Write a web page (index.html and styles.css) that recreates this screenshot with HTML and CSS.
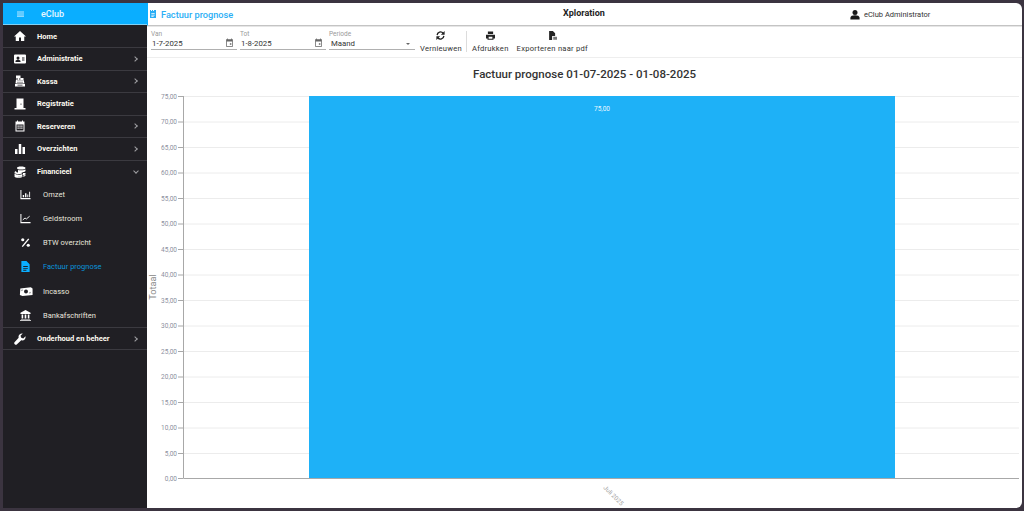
FILE: index.html
```html
<!DOCTYPE html>
<html lang="nl">
<head>
<meta charset="utf-8">
<title>Factuur prognose</title>
<link rel="stylesheet" href="styles.css">
</head>
<body>
<div class="window">
  <aside class="sidebar">
    <div class="brand">
      <svg class="burger" viewBox="0 0 10 8"><path d="M0 1h10M0 4h10M0 7h10" stroke="#b9e8ff" stroke-width="1.500"/></svg>
      <span>eClub</span>
    </div>
    <nav class="menu">
      <div class="item">
        <svg class="ic" viewBox="0 0 24 24"><path d="M12 2 0 13h3.500v9H10v-7h4v7h6.500v-9H24z"/></svg>
        <span class="lbl">Home</span>
      </div>
      <div class="item">
        <svg class="ic" viewBox="0 0 24 24"><path fill-rule="evenodd" d="M2 3h20a2 2 0 0 1 2 2v14a2 2 0 0 1-2 2H2a2 2 0 0 1-2-2V5a2 2 0 0 1 2-2zm6 4a3 3 0 1 0 0 6 3 3 0 0 0 0-6zm-5 11h10v-1.500c0-2-2.500-3-5-3s-5 1-5 3zM16 9v2h5V9zm0 4v2h5v-2z"/></svg>
        <span class="lbl">Administratie</span><i class="chev"></i>
      </div>
      <div class="item">
        <svg class="ic" viewBox="0 0 24 24"><path fill-rule="evenodd" d="M4 1h9v6h-3v2h3V6h6v3l2 8H3l1-8h4V7H4zM2 18h20v5H2zm5 1.500V21h10v-1.500zM7 11v1.500h2V11zm4 0v1.500h2V11zm4 0v1.500h2V11zM7 14v1.500h2V14zm4 0v1.500h2V14zm4 0v1.500h2V14z"/></svg>
        <span class="lbl">Kassa</span><i class="chev"></i>
      </div>
      <div class="item">
        <svg class="ic" viewBox="0 0 24 24"><path fill-rule="evenodd" d="M5 1h14v19h4v3H1v-3h4zm9 10a1.200 1.200 0 1 0 0 2.400 1.200 1.200 0 0 0 0-2.400z"/></svg>
        <span class="lbl">Registratie</span>
      </div>
      <div class="item">
        <svg class="ic" viewBox="0 0 24 24"><path fill-rule="evenodd" d="M6 1h2v2h8V1h2v2h3v20H3V3h3zM5 9v12h14V9zm2 2h2.500v2.500H7zm3.800 0h2.500v2.500h-2.500zm3.700 0H17v2.500h-2.500zM7 15h2.500v2.500H7zm3.800 0h2.500v2.500h-2.500zm3.700 0H17v2.500h-2.500z"/></svg>
        <span class="lbl">Reserveren</span><i class="chev"></i>
      </div>
      <div class="item">
        <svg class="ic" viewBox="0 0 24 24"><path d="M2 12h5v10H2zM9.500 2h5v20h-5zM17 8h5v14h-5z"/></svg>
        <span class="lbl">Overzichten</span><i class="chev"></i>
      </div>
      <div class="item open">
        <svg class="ic" viewBox="0 0 24 24"><path d="M14 1c5 0 9 1 9 3s-4 3-9 3-8-1-8-3 3-3 8-3zM8 8c3 1 10 1 15-1v3c0 1-5 3-10 3H8zM4 10c-1 1-3 1-3 3s4 3 8 3 8-1 8-3H9c-3 0-5-1-5-3zm-3 5v3c0 2 4 3 8 3s8-1 8-3v-2c-3 2-13 2-16-1zm0 4v2c0 2 4 2.500 8 2.500s8-.5 8-2.500v-1c-4 2-12 2-16-1zm17-5h5v2c0 1-2 2-5 2zm0 5c2 0 4-1 5-2v2c0 1-2 2-5 2z"/></svg>
        <span class="lbl">Financieel</span><i class="chev down"></i>
      </div>
      <div class="subs">
        <div class="sub">
          <svg class="sic" viewBox="0 0 24 24"><path d="M2 2v19h21" fill="none" stroke="#fff" stroke-width="2.200"/><path d="M6 13h3v5H6zM11 9h3v9h-3zM16 12h2v6h-2zM20 6h2v12h-2z"/></svg>
          <span>Omzet</span>
        </div>
        <div class="sub">
          <svg class="sic" viewBox="0 0 24 24"><path d="M2 2v19h21" fill="none" stroke="#fff" stroke-width="2.200"/><path d="M6 15l5-4 3 2 7-6" fill="none" stroke="#fff" stroke-width="2"/></svg>
          <span>Geldstroom</span>
        </div>
        <div class="sub">
          <svg class="sic" viewBox="0 0 24 24"><path d="M5 21 19 4" stroke="#fff" stroke-width="3"/><circle cx="6" cy="6" r="3.500"/><circle cx="18" cy="18" r="3.500"/></svg>
          <span>BTW overzicht</span>
        </div>
        <div class="sub active">
          <svg class="sic" viewBox="0 0 24 24"><path fill-rule="evenodd" d="M3 0h11l7 7v17H3zM7 11v2h10v-2zm0 4v2h10v-2zm0 4v2h7v-2z"/></svg>
          <span>Factuur prognose</span>
        </div>
        <div class="sub">
          <svg class="sic wide" viewBox="0 0 32 24"><path fill-rule="evenodd" d="M3 5 27 2l4 3v15L8 22l-6-2zm13 2.500a4.500 4.500 0 1 0 0 9 4.500 4.500 0 0 0 0-9zM6 8v3.500L9 8zm20 8v-3.500L23 16z"/></svg>
          <span>Incasso</span>
        </div>
        <div class="sub">
          <svg class="sic" viewBox="0 0 24 24"><path d="M12 0 1 6v2.500h22V6zM3.500 10H7v8.500H3.500zM10.200 10h3.600v8.500h-3.600zM17 10h3.500v8.500H17zM2 20h20v1.500H2zM0 22.500h24V24H0z"/></svg>
          <span>Bankafschriften</span>
        </div>
      </div>
      <div class="item last">
        <svg class="ic" viewBox="0 0 24 24"><path d="M23 6.500 18.500 11 14.500 9.500 13 5.500 17.500 1C13.500 0 9 3 9 7.500c0 .8.100 1.500.3 2L1.500 18a3 3 0 0 0 4.500 4.500l8.500-7.800c.7.200 1.300.3 2 .3 4.500 0 7.500-4.500 6.500-8.500z"/></svg>
        <span class="lbl">Onderhoud en beheer</span><i class="chev"></i>
      </div>
    </nav>
  </aside>
  <main class="main">
    <header class="topbar">
      <div class="page-title">
        <svg class="title-ic" viewBox="0 0 24 24"><path fill-rule="evenodd" d="M3 0h3v3h3V0h3v3h3V0h6v24H3zM7 9v2.500h10V9zm0 5v2.500h10V14zm0 4.500V21h7v-2.500z"/></svg>
        <span>Factuur prognose</span>
      </div>
      <div class="org">Xploration</div>
      <div class="user">
        <svg class="user-ic" viewBox="0 0 24 24"><circle cx="12" cy="7" r="6"/><path d="M1 24v-4c0-4 5-6 11-6s11 2 11 6v4z"/></svg>
        <span>eClub Administrator</span>
      </div>
    </header>
    <div class="toolbar">
      <div class="field f-date">
        <label>Van</label>
        <div class="val"><span>1-7-2025</span><svg class="cal" viewBox="0 0 24 24"><path fill-rule="evenodd" d="M6 1h2v2h8V1h2v2h3v20H3V3h3zM5 9v12h14V9zm8 5h4v4h-4z"/></svg></div>
      </div>
      <div class="field f-date">
        <label>Tot</label>
        <div class="val"><span>1-8-2025</span><svg class="cal" viewBox="0 0 24 24"><path fill-rule="evenodd" d="M6 1h2v2h8V1h2v2h3v20H3V3h3zM5 9v12h14V9zm8 5h4v4h-4z"/></svg></div>
      </div>
      <div class="field f-sel">
        <label>Periode</label>
        <div class="val"><span class="sel">Maand</span><i class="caret"></i></div>
      </div>
      <button class="tool t-refresh">
        <svg class="tic" viewBox="0 0 24 24"><path d="M3 11a9 9 0 0 1 16-5M21 13a9 9 0 0 1-16 5" fill="none" stroke="#222" stroke-width="3.500"/><path d="M23 0v10H13zM1 24V14h10z"/></svg>
        <span>Vernieuwen</span>
      </button>
      <div class="sep"></div>
      <button class="tool">
        <svg class="tic" viewBox="0 0 24 24"><path fill-rule="evenodd" d="M5 1h14v7H5zM0 10h24v10h-4v3H4v-3H0zm7 5v5.500h10V15z"/></svg>
        <span>Afdrukken</span>
      </button>
      <button class="tool">
        <svg class="tic" viewBox="0 0 24 24"><path d="M3 0h10l6 6v7h-8v11H3z"/><path d="M14 15h10v8H14z" fill="#777"/></svg>
        <span>Exporteren naar pdf</span>
      </button>
    </div>
    <section class="chart-wrap">
      <h1 class="chart-title">Factuur prognose 01-07-2025 - 01-08-2025</h1>
      <svg class="chart" viewBox="0 26 875 426">
        <g class="grid">
          <path d="M36 38.500H872M36 64H872M36 89.500H872M36 115H872M36 140.500H872M36 166H872M36 191.500H872M36 217H872M36 242.500H872M36 268H872M36 293.500H872M36 319H872M36 344.500H872M36 370H872M36 395.500H872"/>
        </g>
        <rect class="bar" x="162" y="38" width="586" height="382"/>
        <path class="axis" d="M36.500 38V420.500H872"/>
        <path class="axis" d="M31 38.500h5M31 64h5M31 89.500h5M31 115h5M31 140.500h5M31 166h5M31 191.500h5M31 217h5M31 242.500h5M31 268h5M31 293.500h5M31 319h5M31 344.500h5M31 370h5M31 395.500h5M31 420.500h5"/>
        <g class="ylab">
          <text x="30" y="40.500">75,00</text><text x="30" y="66">70,00</text><text x="30" y="91.500">65,00</text><text x="30" y="117">60,00</text><text x="30" y="142.500">55,00</text><text x="30" y="168">50,00</text><text x="30" y="193.500">45,00</text><text x="30" y="219">40,00</text><text x="30" y="244.500">35,00</text><text x="30" y="270">30,00</text><text x="30" y="295.500">25,00</text><text x="30" y="321">20,00</text><text x="30" y="346.500">15,00</text><text x="30" y="372">10,00</text><text x="30" y="397.500">5,00</text><text x="30" y="422.500">0,00</text>
        </g>
        <text class="dlab" x="455" y="53">75,00</text>
        <text class="ytitle" transform="translate(9 229) rotate(-90)">Totaal</text>
        <text class="xlab" transform="translate(465 439) rotate(45)" text-anchor="middle">Juli 2025</text>
      </svg>
    </section>
  </main>
</div>
</body>
</html>
```

FILE: styles.css
```css
* { box-sizing: border-box; }
html, body { margin: 0; height: 100%; overflow: hidden; }
body {
  background: #3b3440;
  padding: 3px 2px 3px 3px;
  font-family: Roboto, "Liberation Sans", sans-serif;
}
.window {
  display: flex;
  height: 505px;
  background: #fff;
  border-radius: 0 6px 6px 0;
  overflow: hidden;
}
.sidebar {
  flex: 0 0 144px;
  background: #201f24;
  color: #fff;
}
.brand {
  display: flex;
  align-items: center;
  height: 22px;
  background: #0aaeff;
  border-bottom: 1px solid #7fd0f5;
  color: #e6f7ff;
  font-size: 9px;
  font-weight: 500;
}
.burger { width: 7px; height: 6px; margin-left: 14px; }
.brand span { margin-left: 17px; }
.menu { padding-top: .7px; }
.item {
  display: flex;
  align-items: center;
  height: 22.500px;
  border-bottom: 1px solid #3b3a40;
  font-size: 7.500px;
  font-weight: 700;
}
.item.open { border-bottom: 0; }
.item.last { border-top: 1px solid #3b3a40; height: 23px; }
.ic { width: 12px; height: 12px; margin-left: 11px; fill: #fff; flex: none; }
.lbl { margin-left: 11px; flex: 1; color: #fdfaf0; }
.chev {
  width: 4px;
  height: 4px;
  margin-right: 10px;
  border-top: 1px solid #a0a0a4;
  border-right: 1px solid #a0a0a4;
  transform: rotate(45deg);
}
.chev.down { transform: rotate(135deg); margin-right: 9px; margin-top: -2px; }
.subs { margin-top: -.9px; }
.sub {
  display: flex;
  align-items: center;
  height: 24.200px;
  color: #e8e6df;
  font-size: 7.500px;
  font-weight: 400;
}
.sic { width: 11px; height: 11px; margin-left: 17px; fill: #fff; flex: none; }
.sic.wide { width: 14px; margin-left: 16px; margin-right: -2px; }
.sub span { margin-left: 12px; }
.sub.active { color: #0a94dc; }
.sub.active .sic { fill: #0aaeff; }
.main { flex: 1; min-width: 0; display: flex; flex-direction: column; }
.topbar {
  display: flex;
  align-items: center;
  height: 23px;
  border-bottom: 1px solid #c4c4c4;
  border-left: 1px solid #0aaeff;
  flex: none;
  box-shadow: 0 1px 0 #e6e6e6;
}
.page-title {
  display: flex;
  align-items: center;
  width: 415px;
  color: #2aaef5;
  font-size: 9.200px;
  font-weight: 500;
}
.title-ic { width: 8px; height: 10px; margin-left: 1px; fill: #2aaef5; }
.page-title span { margin-left: 4px; }
.org { width: 287px; font-size: 9px; font-weight: 700; color: #1e1e1e; margin-top: -2px; }
.user { display: flex; align-items: center; color: #333; font-size: 7.500px; font-weight: 400; }
.user-ic { width: 10px; height: 11px; fill: #1a1a1a; margin-right: 4px; }
.toolbar {
  display: flex;
  align-items: flex-start;
  height: 32px;
  flex: none;
  padding: 5px 0 0 4px;
  border-bottom: 1px solid #eeeeee;
}
.field { margin-right: 3px; border-bottom: 1px solid #b0b0b0; height: 19px; }
.f-date { width: 86px; }
.f-sel { width: 86px; }
.field label { display: block; font-size: 6.500px; line-height: 7px; color: #9a9a9a; }
.val { display: flex; align-items: center; justify-content: space-between; font-size: 7.800px; line-height: 11px; color: #333; padding-left: 1px; }
.sel { margin-left: 1px; }
.cal { width: 9px; height: 9px; fill: #666; margin-right: 3px; margin-top: -2px; }
.caret {
  width: 0;
  height: 0;
  border: 2px solid transparent;
  border-top-color: #666;
  border-bottom: 0;
  margin-right: 5px;
}
.tool {
  display: flex;
  flex-direction: column;
  align-items: center;
  background: none;
  border: 0;
  padding: 0;
  margin: 0 8px 0 0;
  font: 400 7.600px Roboto, "Liberation Sans", sans-serif;
  letter-spacing: .25px;
  color: #333;
}
.t-refresh { margin-left: 2px; margin-right: 4px; }
.tic { width: 9px; height: 9px; fill: #222; margin-bottom: 4px; }
.sep { width: 1px; height: 21px; background: #dcdcdc; margin-right: 5px; }
.chart-wrap { flex: 1; min-height: 0; }
.chart-title {
  margin: 0;
  padding-top: 9px;
  height: 26px;
  text-align: center;
  font-size: 11.500px;
  font-weight: 500;
  color: #333;
}
.chart { display: block; width: 875px; height: 426px; }
.chart text { font-family: Roboto, "Liberation Sans", sans-serif; }
.grid path { stroke: #ececec; stroke-width: 1; fill: none; }
.bar { fill: #1eb1f7; }
.axis { stroke: #a8a8a8; stroke-width: 1; fill: none; }
.ylab text { font-size: 6.500px; fill: #8c90a0; text-anchor: end; }
.dlab { font-size: 6.500px; fill: #e8f7ff; text-anchor: middle; }
.ytitle { font-size: 9.200px; fill: #8a8a8a; text-anchor: middle; }
.xlab { font-size: 6.200px; fill: #a0a0a0; }
```
